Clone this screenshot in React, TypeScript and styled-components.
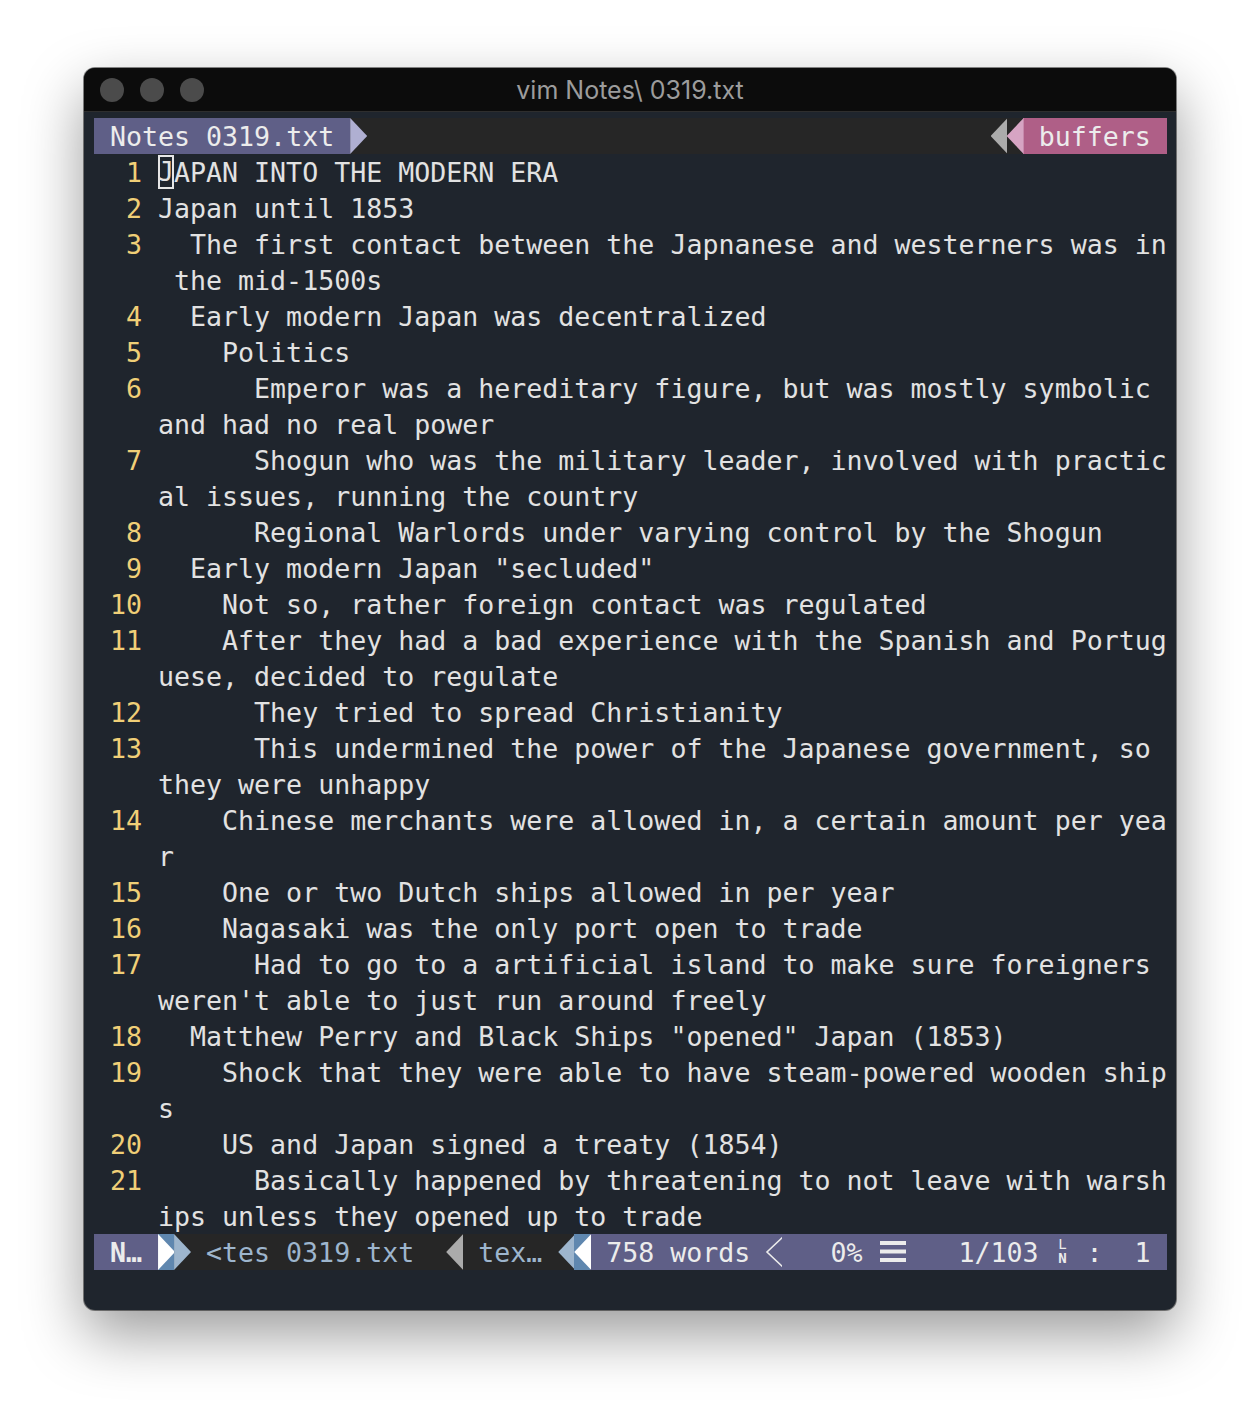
import React from 'react';
import styled, { createGlobalStyle } from 'styled-components';

const COLS = 63;

const PURPLE = '#5f5f87';
const LAVENDER = '#afafd2';
const PINK = '#af5f87';
const LIGHTPINK = '#d6a4c3';
const GREY = '#ababab';
const BLUE = '#5f87af';
const LIGHTBLUE = '#9db5cd';
const DARK = '#262626';
const TERM = '#1f252d';
const WHITE = '#ececec';

const lines = [
    'JAPAN INTO THE MODERN ERA',
    'Japan until 1853',
    '  The first contact between the Japnanese and westerners was in the mid-1500s',
    '  Early modern Japan was decentralized',
    '    Politics',
    '      Emperor was a hereditary figure, but was mostly symbolic and had no real power',
    '      Shogun who was the military leader, involved with practical issues, running the country',
    '      Regional Warlords under varying control by the Shogun',
    '  Early modern Japan "secluded"',
    '    Not so, rather foreign contact was regulated',
    '    After they had a bad experience with the Spanish and Portuguese, decided to regulate',
    '      They tried to spread Christianity',
    '      This undermined the power of the Japanese government, so they were unhappy',
    '    Chinese merchants were allowed in, a certain amount per year',
    '    One or two Dutch ships allowed in per year',
    '    Nagasaki was the only port open to trade',
    "      Had to go to a artificial island to make sure foreigners weren't able to just run around freely",
    '  Matthew Perry and Black Ships "opened" Japan (1853)',
    '    Shock that they were able to have steam-powered wooden ships',
    '    US and Japan signed a treaty (1854)',
    '      Basically happened by threatening to not leave with warships unless they opened up to trade',
];

const wrap = (text: string) => {
    const parts: string[] = [];
    for (let i = 0; i < text.length; i += COLS) parts.push(text.slice(i, i + COLS));
    return parts;
};

const App = () => {
    const rows: { n?: number; text: string }[] = [];
    lines.forEach((line, i) => {
        wrap(line).forEach((part, j) => rows.push({ n: j === 0 ? i + 1 : undefined, text: part }));
    });

    return (
        <>
            <GlobalStyle />
            <Page>
                <Window>
                    <TitleBar>
                        <Lights>
                            <Light />
                            <Light />
                            <Light />
                        </Lights>
                        <Title>vim Notes\ 0319.txt</Title>
                        <span />
                    </TitleBar>
                    <Screen>
                        <Bar>
                            <Seg $bg={PURPLE} $w={16}> Notes 0319.txt </Seg>
                            <Sep $dir="right" $fg={LAVENDER} $bg={DARK} />
                            <Fill />
                            <Sep $dir="left" $fg={GREY} $bg={DARK} />
                            <Sep $dir="left" $fg={LIGHTPINK} $bg={DARK} />
                            <Seg $bg={PINK} $w={9}> buffers </Seg>
                        </Bar>

                        {rows.map((row, i) => (
                            <Row key={i}>
                                <LineNr>{row.n ?? ''}</LineNr>
                                {i === 0 ? (
                                    <>
                                        <Cursor>{row.text[0]}</Cursor>
                                        {row.text.slice(1)}
                                    </>
                                ) : (
                                    row.text
                                )}
                            </Row>
                        ))}

                        <Bar>
                            <Seg $bg={PURPLE} $w={4} $bold> N…</Seg>
                            <Sep $dir="right" $fg="#ffffff" $bg={BLUE} />
                            <Sep $dir="right" $fg={LIGHTBLUE} $bg={DARK} />
                            <Seg $bg={DARK} $fg={LIGHTBLUE} $w={16}>{' <tes 0319.txt  '}</Seg>
                            <Sep $dir="left" $fg={GREY} $bg={DARK} />
                            <Seg $bg={DARK} $fg={LIGHTBLUE} $w={6}> tex… </Seg>
                            <Sep $dir="left" $fg={LIGHTBLUE} $bg={DARK} />
                            <Sep $dir="left" $fg="#ffffff" $bg={BLUE} />
                            <Seg $bg={PURPLE} $w={11}> 758 words </Seg>
                            <Cell>
                                <svg width="16" height="36" viewBox="0 0 16 36" overflow="visible">
                                    <polyline points="19,1 1,18 19,35" fill="none" stroke={WHITE} strokeWidth="1.6" />
                                </svg>
                            </Cell>
                            <Seg $bg={PURPLE} $w={6}>{'   0% '}</Seg>
                            <Cell $w={2}>
                                <svg width="32" height="36" viewBox="0 0 32 36">
                                    <rect x="2" y="7" width="26" height="4" fill={WHITE} />
                                    <rect x="2" y="15.5" width="26" height="4" fill={WHITE} />
                                    <rect x="2" y="24" width="26" height="4" fill={WHITE} />
                                </svg>
                            </Cell>
                            <Seg $bg={PURPLE} $w={9}>{'   1/103 '}</Seg>
                            <LnGlyph>
                                <span>L</span>
                                <b>N</b>
                            </LnGlyph>
                            <Seg $bg={PURPLE} $w={6}>{' :  1 '}</Seg>
                        </Bar>
                        <Row />
                    </Screen>
                </Window>
            </Page>
        </>
    );
};

export default App;

const GlobalStyle = createGlobalStyle`
    body {
        margin: 0;
        background: #ffffff;
    }
`;

const Page = styled.div`
    padding: 68px 84px 100px;
`;

const Window = styled.div`
    width: 1092px;
    background: ${TERM};
    border-radius: 11px;
    overflow: hidden;
    box-shadow: 0 0 0 1px rgba(0, 0, 0, 0.45), 0 24px 60px rgba(0, 0, 0, 0.4);
`;

const TitleBar = styled.div`
    height: 43px;
    display: grid;
    grid-template-columns: 1fr auto 1fr;
    align-items: center;
    background: #0c0c0c;
    border-bottom: 1px solid #2e2e2e;
    padding: 0 16px;
`;

const Lights = styled.div`
    display: flex;
    gap: 16px;
`;

const Light = styled.span`
    width: 24px;
    height: 24px;
    border-radius: 50%;
    background: #4b4b4b;
`;

const Title = styled.div`
    font-family: Inter, 'Noto Sans', sans-serif;
    font-size: 25px;
    color: #9c9c9c;
    padding-top: 1px;
`;

const Screen = styled.div`
    padding: 6px 10px 4px;
    font-family: 'DejaVu Sans Mono', monospace;
    font-size: 26.6px;
    line-height: 36px;
    color: #e2e2e2;
`;

const Bar = styled.div`
    display: flex;
    height: 36px;
    width: 67ch;
    padding-top: 1px;
    box-sizing: border-box;
    background: ${DARK};
`;

const Seg = styled.span<{ $bg: string; $fg?: string; $w: number; $bold?: boolean }>`
    flex: none;
    width: ${(p) => p.$w}ch;
    height: 36px;
    margin-top: -1px;
    padding-top: 1px;
    box-sizing: border-box;
    white-space: pre;
    overflow: hidden;
    background: ${(p) => p.$bg};
    color: ${(p) => p.$fg ?? WHITE};
    font-weight: ${(p) => (p.$bold ? 700 : 400)};
`;

const Cell = styled.span<{ $w?: number }>`
    flex: none;
    display: flex;
    width: ${(p) => p.$w ?? 1}ch;
    height: 36px;
    margin-top: -1px;
    background: ${PURPLE};
`;

const Sep = styled.span<{ $dir: 'left' | 'right'; $fg: string; $bg: string }>`
    flex: none;
    position: relative;
    width: 1ch;
    height: 36px;
    margin-top: -1px;
    background: ${(p) => p.$bg};

    &::after {
        content: '';
        position: absolute;
        inset: 0 -1px 0 0;
        background: ${(p) => p.$fg};
        clip-path: ${(p) =>
            p.$dir === 'right'
                ? 'polygon(0 0, 100% 50%, 0 100%)'
                : 'polygon(100% 0, 0 50%, 100% 100%)'};
    }
`;

const Fill = styled.span`
    flex: 1;
    margin-top: -1px;
    background: ${DARK};
`;

const LnGlyph = styled.span`
    flex: none;
    width: 1ch;
    height: 36px;
    margin-top: -1px;
    display: flex;
    flex-direction: column;
    align-items: center;
    padding-top: 3px;
    box-sizing: border-box;
    background: ${PURPLE};
    color: ${WHITE};

    span,
    b {
        font-size: 14px;
        line-height: 14px;
    }

    b {
        font-weight: 700;
    }
`;

const Row = styled.div`
    height: 36px;
    padding-top: 1px;
    box-sizing: border-box;
    white-space: pre;
`;

const LineNr = styled.span`
    display: inline-block;
    width: 3ch;
    margin-right: 1ch;
    text-align: right;
    color: #f0cf77;
`;

const Cursor = styled.span`
    display: inline-block;
    box-shadow: inset 0 0 0 2px #e6e6e6;
    height: 34px;
    line-height: 34px;
    vertical-align: top;
    margin-top: 0;
`;
